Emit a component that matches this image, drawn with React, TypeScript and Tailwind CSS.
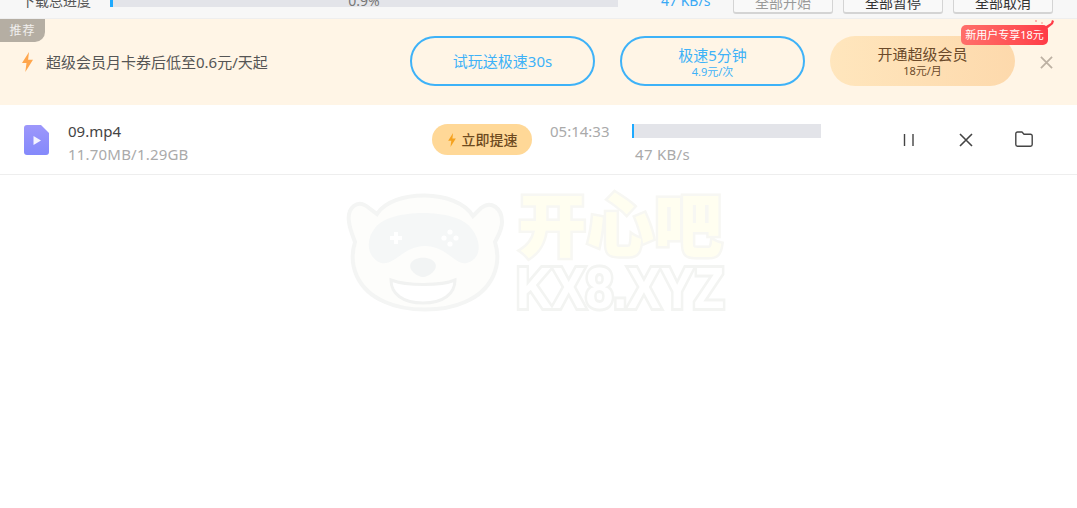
const font = "font-['Noto_Sans','Noto_Sans_CJK_SC',sans-serif]"

const Bolt = ({ className }: { className: string }) => (
    <svg viewBox="0 0 12 20" className={className}>
        <path d="M7.5 0 L0.5 11 L5 11 L3.8 20 L11.5 7.8 L6.6 7.8 Z" fill="currentColor" />
    </svg>
)

const TopBar = () => {
    return (
        <div className="h-[19px] overflow-hidden bg-[#f7f7f7] border-b border-[#eeeeee] flex items-start">
            <div className="flex items-start w-full -mt-[7px]">
                <p className="ml-[21px] w-[89px] text-[14px] leading-[16px] text-[#555] whitespace-nowrap">下载总进度</p>
                <div className="relative w-[508px] h-[14px] bg-[#e3e4e9] flex justify-center">
                    <div className="absolute left-0 top-0 bottom-0 w-[3px] bg-[#1eaaff]" />
                    <span className="text-[14px] leading-[16px] text-[#777]">0.9%</span>
                </div>
                <p className="ml-[43px] w-[72px] text-[14px] leading-[16px] text-[#3aa9f5] whitespace-nowrap">47 KB/s</p>
                <div className="flex gap-[10px]">
                    <TopButton label="全部开始" className="text-[#999]" />
                    <TopButton label="全部暂停" className="text-[#333]" />
                    <TopButton label="全部取消" className="text-[#333]" />
                </div>
            </div>
        </div>
    )
}

const TopButton = ({ label, className }: { label: string; className: string }) => (
    <button className={`w-[100px] h-[21px] border border-b-2 border-[#d4d4d4] rounded-[3px] bg-[#f9f9f9] text-[14px] leading-[14px] ${className}`}>
        {label}
    </button>
)

const Banner = () => {
    return (
        <div className="relative h-[86px] bg-[#fff5e6] flex items-center">
            <span className="absolute left-0 top-0 w-[45px] h-[23px] bg-[#b5aea3] rounded-br-[10px] text-[12px] leading-[23px] text-center text-white/80 tracking-[1px]">推荐</span>
            <Bolt className="ml-[20px] w-[15px] h-[20px] text-[#ffa64d] shrink-0" />
            <p className="ml-[11px] w-[364px] text-[15px] text-[#555] whitespace-nowrap">超级会员月卡券后低至0.6元/天起</p>
            <div className="flex gap-[25px] -mt-[2px]">
                <button className="w-[185px] h-[50px] rounded-full border-2 border-[#3eb2f8] text-[15px] text-[#3eb2f8]">试玩送极速30s</button>
                <button className="w-[185px] h-[50px] rounded-full border-2 border-[#3eb2f8] text-[#3eb2f8] flex flex-col items-center justify-center">
                    <span className="text-[15px] leading-[20px]">极速5分钟</span>
                    <span className="text-[11px] leading-[13px]">4.9元/次</span>
                </button>
                <div className="relative">
                    <button className="w-[185px] h-[50px] rounded-full bg-gradient-to-r from-[#ffe6bd] to-[#fdd9ac] text-[#6b4a2a] flex flex-col items-center justify-center">
                        <span className="text-[15px] leading-[20px]">开通超级会员</span>
                        <span className="text-[11px] leading-[14px]">18元/月</span>
                    </button>
                    <span className="absolute left-[131px] -top-[11px] w-[87px] h-[20px] rounded-[5px] bg-gradient-to-r from-[#ff6f6a] to-[#ff3b47] text-[11px] leading-[20px] text-center text-white whitespace-nowrap">新用户专享18元</span>
                    <svg viewBox="0 0 24 12" className="absolute left-[200px] -top-[17px] w-[24px] h-[12px]">
                        <path d="M8 11 L16 7 L21 4 L22 1 L24 2 L23 5 L18 9 L12 12 Z" fill="#ff3b47" />
                        <circle cx="6" cy="2" r="0.7" fill="#ff3b47" />
                        <circle cx="12" cy="4" r="0.7" fill="#ff6f6a" />
                    </svg>
                </div>
            </div>
            <svg viewBox="0 0 14 14" className="ml-[25px] w-[13px] h-[13px] text-[#bdb1a3]">
                <path d="M1 1 L13 13 M13 1 L1 13" stroke="currentColor" strokeWidth="1.9" fill="none" />
            </svg>
        </div>
    )
}

const DownloadRow = () => {
    return (
        <div className="h-[70px] border-b border-[#eeeeee] flex">
            <svg viewBox="0 0 25 30" className="ml-[24px] mt-[20px] w-[25px] h-[30px] shrink-0">
                <defs>
                    <linearGradient id="fileFill" x1="0" y1="0" x2="0" y2="1">
                        <stop offset="0" stopColor="#9d97fb" />
                        <stop offset="1" stopColor="#8489fb" />
                    </linearGradient>
                </defs>
                <path d="M3 0 H17 L25 8 V27 A3 3 0 0 1 22 30 H3 A3 3 0 0 1 0 27 V3 A3 3 0 0 1 3 0 Z" fill="url(#fileFill)" />
                <path d="M9.5 11 L17 15.5 L9.5 20 Z" fill="#f4f3ff" />
            </svg>
            <div className="ml-[19px] w-[364px] pt-[15px] shrink-0">
                <p className="text-[15px] leading-[22px] text-[#444]">09.mp4</p>
                <p className="text-[15px] leading-[24px] text-[#aaa] tracking-[0.2px]">11.70MB/1.29GB</p>
            </div>
            <button className="mt-[19px] w-[100px] h-[31px] shrink-0 rounded-full bg-[#ffd897] flex items-center justify-center gap-[5px] text-[14px] font-medium text-[#6e4a1e]">
                <Bolt className="w-[10px] h-[14px] text-[#f5a21f]" />
                立即提速
            </button>
            <p className="ml-[18px] mt-[15px] w-[82px] text-[15px] leading-[22px] text-[#aaa] shrink-0">05:14:33</p>
            <div className="w-[190px] mt-[19px] shrink-0">
                <div className="w-[189px] h-[14px] bg-[#e3e4e9]">
                    <div className="w-[2px] h-full bg-[#1eaaff]" />
                </div>
                <p className="ml-[3px] mt-[5px] text-[15px] leading-[22px] text-[#aaa] tracking-[0.3px]">47 KB/s</p>
            </div>
            <div className="ml-[80px] mt-[28px] flex items-start">
                <svg viewBox="0 0 14 14" className="w-[14px] h-[14px] text-[#444]">
                    <path d="M2.5 1 V13 M11 1 V13" stroke="currentColor" strokeWidth="1.4" fill="none" />
                </svg>
                <svg viewBox="0 0 14 14" className="ml-[43px] w-[14px] h-[14px] text-[#444]">
                    <path d="M1 1 L13 13 M13 1 L1 13" stroke="currentColor" strokeWidth="1.6" fill="none" />
                </svg>
                <svg viewBox="0 0 18 16" className="ml-[42px] -mt-[2px] w-[18px] h-[16px] text-[#444]">
                    <path d="M2.5 1 H7 L9 3.2 H15.5 A1.7 1.7 0 0 1 17.2 5 V13.5 A1.7 1.7 0 0 1 15.5 15.2 H2.5 A1.7 1.7 0 0 1 0.8 13.5 V2.7 A1.7 1.7 0 0 1 2.5 1 Z" stroke="currentColor" strokeWidth="1.4" fill="none" strokeLinejoin="round" />
                </svg>
            </div>
        </div>
    )
}

const Watermark = () => {
    return (
        <div className="absolute left-[345px] top-[190px] w-[390px] h-[128px] flex pointer-events-none select-none">
            <svg viewBox="0 0 160 124" className="w-[160px] h-[124px] shrink-0">
                <path d="M24 18 C12 8 2 18 4 32 C5 40 8 46 10 52 C3 75 12 100 40 112 C62 122 98 122 120 112 C148 100 157 75 150 52 C153 46 157 40 157 32 C157 18 146 10 136 18 L128 26 C112 -1 48 -1 32 24 Z" fill="#fdfdfb" stroke="#f4f5f4" strokeWidth="4" />
                <path d="M30 38 C44 18 112 18 126 38 C136 50 138 68 122 73 C110 76 102 56 80 56 C58 56 50 76 36 73 C22 68 20 50 30 38 Z" fill="#f5f7f7" />
                <path d="M51 42 V54 M45 48 H57" stroke="#ffffff" strokeWidth="4" />
                <circle cx="105" cy="42" r="2.6" fill="#ffffff" />
                <circle cx="105" cy="54" r="2.6" fill="#ffffff" />
                <circle cx="99" cy="48" r="2.6" fill="#ffffff" />
                <circle cx="111" cy="48" r="2.6" fill="#ffffff" />
                <path d="M66 73 C70 66 86 66 90 73 C94 80 83 87 78 87 C73 87 62 80 66 73 Z" fill="#f2f4f4" />
                <path d="M46 90 C62 96 96 96 110 90 C110 104 98 113 78 113 C58 113 46 104 46 90 Z" fill="#ffffff" stroke="#f1f2f1" strokeWidth="3" />
            </svg>
            <div className="ml-[11px] flex flex-col items-center">
                <p className="text-[68px] leading-[70px] font-black text-[#fffef0] [-webkit-text-stroke:5px_#f7f7f3] [paint-order:stroke_fill] whitespace-nowrap">开心吧</p>
                <p className="mt-[3px] text-[50px] leading-[50px] font-bold scale-y-[1.15] font-['Liberation_Sans',sans-serif] text-white [-webkit-text-stroke:5px_#f3f4f2] [paint-order:stroke_fill] whitespace-nowrap">KX8.XYZ</p>
            </div>
        </div>
    )
}

const App = () => {
    return (
        <div className={`relative w-[1077px] h-[508px] overflow-hidden bg-white ${font}`}>
            <TopBar />
            <Banner />
            <DownloadRow />
            <Watermark />
        </div>
    )
}

export default App
